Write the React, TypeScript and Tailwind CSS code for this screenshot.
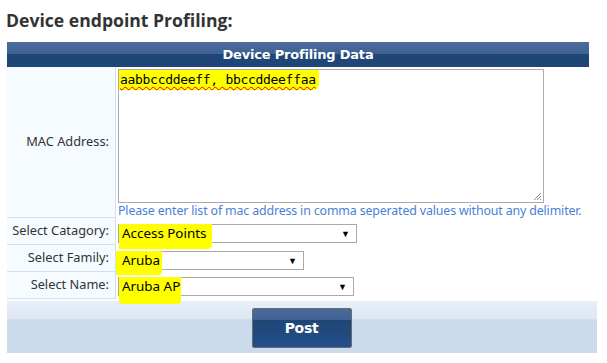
import React from "react";

const YEL = "bg-[#ffff00]";

function Select({ w, text, hl }: { w: string; text: string; hl: React.ReactNode }) {
  return (
    <div className={`relative ${w} h-[19px] border border-[#a9a9a9] bg-white flex items-center`}>
      {hl}
      <span className="relative pl-[3px] text-[13.4px] text-black font-['Noto_Sans',sans-serif] leading-none">{text}</span>
      <span className="absolute right-[6px] top-[4px] text-[9px] leading-none text-black">▼</span>
    </div>
  );
}

function Label({ children, h, extra = "" }: { children: React.ReactNode; h: string; extra?: string }) {
  return (
    <div className={`w-[109px] ${h} shrink-0 bg-[#f5fbff] border-r border-b border-[#d3e0f0] flex items-center justify-end pr-[6px] text-[12.8px] text-[#333] ${extra}`}>
      {children}
    </div>
  );
}

export default function App() {
  return (
    <div className="w-[607px] h-[363px] bg-white font-['Noto_Sans',sans-serif] overflow-hidden">
      <h1 className="pl-[6px] pt-[8px] h-[42px] text-[17.6px] font-bold text-[#333] font-['Open_Sans',sans-serif] leading-[24px]">
        Device endpoint Profiling:
      </h1>
      <div className="ml-[7px] w-[582px] h-[25px] bg-[linear-gradient(#4c6c9c,#3f6193_48%,#1f4677_48%,#1f4677)] flex items-center justify-center text-white font-bold text-[13px] font-['DejaVu_Sans',sans-serif] tracking-[-0.2px]">
        Device Profiling Data
      </div>
      <div className="ml-[7px] flex">
        <Label h="h-[151px]">MAC Address:</Label>
        <div className="pl-[2px] pt-[2px]">
          <div className="relative w-[426px] h-[134px] border border-[#a9a9a9] bg-white">
            <div className={`absolute left-0 top-0 w-[200px] h-[20px] ${YEL} rounded-br-[6px]`} />
            <span className="relative pl-[1px] pt-[2px] block text-[13px] text-black font-['DejaVu_Sans_Mono',monospace] tracking-[-0.3px] leading-[16px] underline decoration-wavy decoration-[#e00] decoration-[1px] underline-offset-2">
              aabbccddeeff
              <span className="no-underline">, </span>
              <span className="no-underline">bbccddeeffaa</span>
            </span>
            <svg className="absolute right-[1px] bottom-[1px]" width="9" height="9" viewBox="0 0 9 9">
              <path d="M8 1L1 8M8 4L4 8M8 7L7 8" stroke="#888" strokeWidth="1" />
            </svg>
          </div>
          <div className="text-[12.4px] text-[#4a7fd6] mt-[1px] leading-[14px] tracking-[-0.15px] whitespace-nowrap">
            Please enter list of mac address in comma seperated values without any delimiter.
          </div>
        </div>
      </div>
      <div className="ml-[7px] flex">
        <Label h="h-[27px]">Select Catagory:</Label>
        <div className="pl-[2px] pt-[6px]">
          <Select
            w="w-[239px]"
            text="Access Points"
            hl={<div className={`absolute left-0 top-[-1px] w-[93px] h-[25px] ${YEL} rounded-br-[4px]`} />}
          />
        </div>
      </div>
      <div className="ml-[7px] flex">
        <Label h="h-[27px]">Select Family:</Label>
        <div className="pl-[2px] pt-[6px]">
          <Select
            w="w-[186px]"
            text="Aruba"
            hl={<div className={`absolute left-[-3px] top-[-1px] w-[46px] h-[24px] ${YEL} rounded-br-[4px]`} />}
          />
        </div>
      </div>
      <div className="ml-[7px] flex">
        <Label h="h-[27px]">Select Name:</Label>
        <div className="pl-[2px] pt-[5px] relative z-10">
          <Select
            w="w-[236px]"
            text="Aruba AP"
            hl={<div className={`absolute left-0 top-[-1px] w-[62px] h-[27px] ${YEL} rounded-b-[4px]`} />}
          />
        </div>
      </div>
      <div className="ml-[7px] mt-[2px] w-[590px] h-[52px] bg-[linear-gradient(#e9eff9,#dde7f3_34%,#ccdbeb_36%,#ccdbeb)] flex justify-center pt-[7px]">
        <button className="w-[100px] h-[40px] ml-[-1px] rounded-[2px] border border-[#6b6b6b] bg-[linear-gradient(#4a6a9a,#3f6193_30%,#1f4677_30%,#22508a)] text-white font-bold text-[14px] font-['DejaVu_Sans',sans-serif] tracking-[-0.3px]">
          Post
        </button>
      </div>
    </div>
  );
}
